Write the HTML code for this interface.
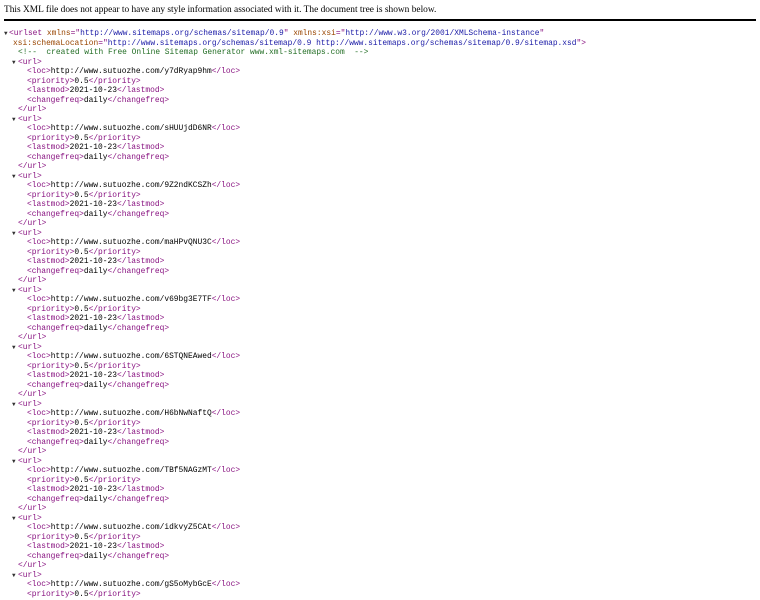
<!DOCTYPE html>
<html><head><meta charset="utf-8"><style>
body{margin:0;background:#fff;}
.hd{position:absolute;left:4px;top:5px;font:9.4px "Liberation Serif",serif;color:#000;white-space:nowrap;}
.rule{position:absolute;left:4px;right:4px;top:19px;height:2px;background:#000;}
.tree{position:absolute;left:0;top:29px;font:7.9px/9.5px "Liberation Mono",monospace;color:#000;}
.l{height:9.5px;position:relative;white-space:pre;}
.t{color:#881280}.a{color:#994500}.v{color:#1a1aa6}.c{color:#236e25}
.ar{position:absolute;font-size:6px;color:#333;}
</style></head><body>
<div class="hd">This XML file does not appear to have any style information associated with it. The document tree is shown below.</div>
<div class="rule"></div>
<div class="tree"><div class="l" style="padding-left:9px"><span class="ar" style="left:4px">▼</span><span class="t">&lt;urlset</span> <span class="a">xmlns</span><span class="t">="</span><span class="v">http://www.sitemaps.org/schemas/sitemap/0.9</span><span class="t">"</span> <span class="a">xmlns:xsi</span><span class="t">="</span><span class="v">http://www.w3.org/2001/XMLSchema-instance</span><span class="t">"</span></div><div class="l" style="padding-left:13px"><span class="a">xsi:schemaLocation</span><span class="t">="</span><span class="v">http://www.sitemaps.org/schemas/sitemap/0.9 http://www.sitemaps.org/schemas/sitemap/0.9/sitemap.xsd</span><span class="t">"&gt;</span></div><div class="l" style="padding-left:18px"><span class="c">&lt;!--  created with Free Online Sitemap Generator www.xml-sitemaps.com  --&gt;</span></div><div id="u"></div></div>
<script>
var ids=["y7dRyap9hm","sHUUjdD6NR","9Z2ndKCSZh","maHPvQNU3C","v69bg3E7TF","6STQNEAwed","H6bNwNaftQ","TBf5NAGzMT","idkvyZ5CAt","gS5oMybGcE"];
var h="";
ids.forEach(function(id,i){
h+='<div class="l" style="padding-left:18px"><span class="ar" style="left:12px">▼</span><span class="t">&lt;url&gt;</span></div>';
h+='<div class="l" style="padding-left:27px"><span class="t">&lt;loc&gt;</span>http://www.sutuozhe.com/'+id+'<span class="t">&lt;/loc&gt;</span></div>';
h+='<div class="l" style="padding-left:27px"><span class="t">&lt;priority&gt;</span>0.5<span class="t">&lt;/priority&gt;</span></div>';
if(i<9){
h+='<div class="l" style="padding-left:27px"><span class="t">&lt;lastmod&gt;</span>2021-10-23<span class="t">&lt;/lastmod&gt;</span></div>';
h+='<div class="l" style="padding-left:27px"><span class="t">&lt;changefreq&gt;</span>daily<span class="t">&lt;/changefreq&gt;</span></div>';
h+='<div class="l" style="padding-left:18px"><span class="t">&lt;/url&gt;</span></div>';
}
});
document.getElementById("u").outerHTML=h;
</script>
</body></html>
